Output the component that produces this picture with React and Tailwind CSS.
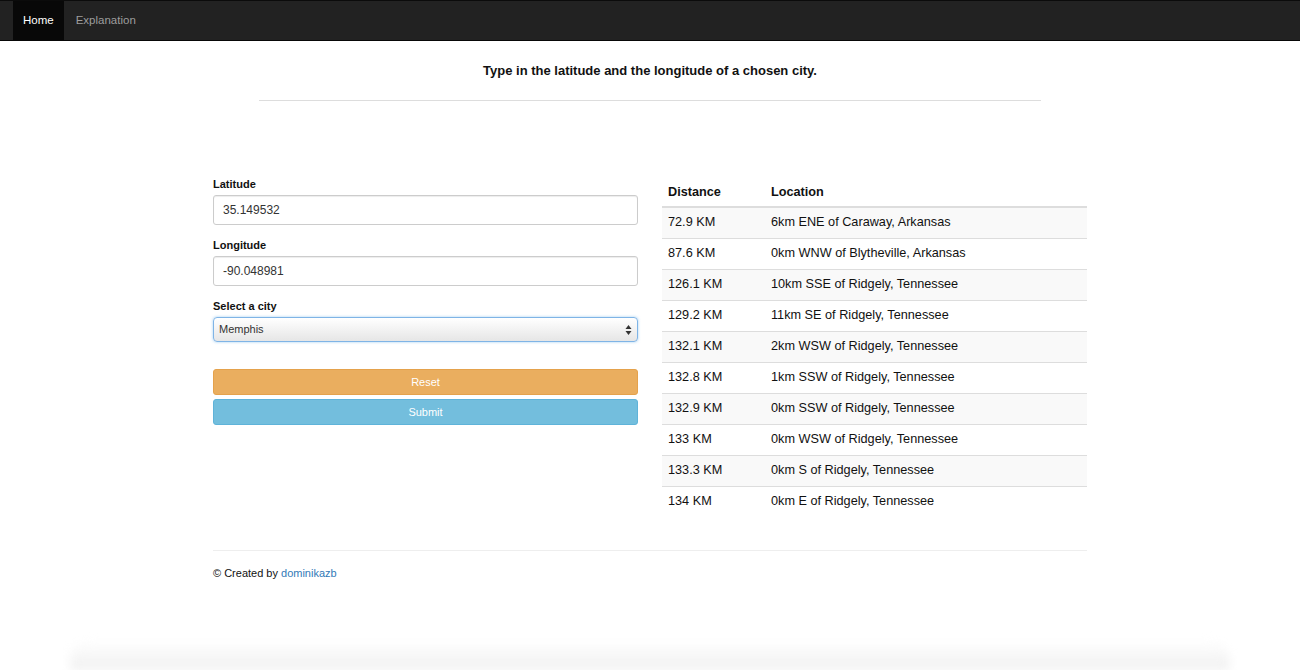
import { useState } from "react";

const rows = [
    ["72.9 KM", "6km ENE of Caraway, Arkansas"],
    ["87.6 KM", "0km WNW of Blytheville, Arkansas"],
    ["126.1 KM", "10km SSE of Ridgely, Tennessee"],
    ["129.2 KM", "11km SE of Ridgely, Tennessee"],
    ["132.1 KM", "2km WSW of Ridgely, Tennessee"],
    ["132.8 KM", "1km SSW of Ridgely, Tennessee"],
    ["132.9 KM", "0km SSW of Ridgely, Tennessee"],
    ["133 KM", "0km WSW of Ridgely, Tennessee"],
    ["133.3 KM", "0km S of Ridgely, Tennessee"],
    ["134 KM", "0km E of Ridgely, Tennessee"],
];

export default function App() {
    const [lat, setLat] = useState("35.149532");
    const [lng, setLng] = useState("-90.048981");

    return (
        <div className="relative h-[670px] overflow-hidden bg-white text-[#111] font-['Liberation_Sans',Arial,sans-serif]">
            {/* Navbar */}
            <nav className="h-[41px] bg-[#222] border-t border-t-[#0b0b0b] border-b border-b-[#080808] flex px-[13px]">
                <a className="h-full flex items-center px-[10px] bg-[#080808] text-white text-[11.5px]">Home</a>
                <a className="h-full flex items-center px-[12px] text-[#9d9d9d] text-[11.5px]">Explanation</a>
            </nav>

            {/* Heading */}
            <div className="w-[782px] mx-auto pt-[22px]">
                <h5 className="text-center text-[13px] font-semibold leading-[16px]">
                    Type in the latitude and the longitude of a chosen city.
                </h5>
                <hr className="mt-[21px] border-t border-[#ddd]" />
            </div>

            <div className="w-[874px] mx-auto mt-[76px]">
                <div className="grid grid-cols-2 gap-[24px]">
                    {/* Form */}
                    <div>
                        <label className="block text-[11px] font-bold leading-[14px]">Latitude</label>
                        <input
                            value={lat}
                            onChange={(e) => setLat(e.target.value)}
                            className="mt-[4px] w-full h-[30px] px-[9px] text-[12px] text-[#333] border border-[#ccc] rounded-[3px] shadow-[inset_0_1px_1px_rgba(0,0,0,0.075)] outline-none"
                        />
                        <label className="block mt-[13px] text-[11px] font-bold leading-[14px]">Longitude</label>
                        <input
                            value={lng}
                            onChange={(e) => setLng(e.target.value)}
                            className="mt-[4px] w-full h-[30px] px-[9px] text-[12px] text-[#333] border border-[#ccc] rounded-[3px] shadow-[inset_0_1px_1px_rgba(0,0,0,0.075)] outline-none"
                        />
                        <label className="block mt-[13px] text-[11px] font-bold leading-[14px]">Select a city</label>
                        <div className="relative mt-[4px] h-[25px] rounded-[4px] border border-[#7fb4e6] shadow-[0_0_3px_rgba(102,175,233,0.6)] bg-gradient-to-b from-white to-[#e6e6e6] flex items-center px-[5px] text-[11px] text-[#333]">
                            Memphis
                            <svg className="absolute right-[5px] top-[6px]" width="7" height="12" viewBox="0 0 7 12">
                                <path d="M3.5 1 L6.5 5 L0.5 5 Z" fill="#333" />
                                <path d="M3.5 11 L6.5 7 L0.5 7 Z" fill="#333" />
                            </svg>
                        </div>

                        <button className="mt-[27px] w-full h-[26px] rounded-[3px] bg-[#eaae5f] border border-[#e5a24c] text-white text-[11px]">
                            Reset
                        </button>
                        <button className="mt-[4px] w-full h-[26px] rounded-[3px] bg-[#73bedd] border border-[#5fb3d9] text-white text-[11px]">
                            Submit
                        </button>
                    </div>

                    {/* Results table */}
                    <table className="w-full text-[12.7px] border-collapse self-start">
                        <thead>
                            <tr className="border-b-2 border-[#ddd]">
                                <th className="text-left font-bold px-[6px] pt-[7px] pb-[5px] leading-[17px] w-[106px]">Distance</th>
                                <th className="text-left font-bold px-[3px] pt-[7px] pb-[5px] leading-[17px]">Location</th>
                            </tr>
                        </thead>
                        <tbody>
                            {rows.map((r, i) => (
                                <tr key={i} className={(i % 2 === 0 ? "bg-[#f9f9f9] " : "") + "border-t border-[#ddd] first:border-t-0 h-[31px]"}>
                                    <td className="px-[6px]">{r[0]}</td>
                                    <td className="px-[3px]">{r[1]}</td>
                                </tr>
                            ))}
                        </tbody>
                    </table>
                </div>

                {/* Footer */}
                <hr className="mt-[33px] border-t border-[#eee]" />
                <p className="mt-[14px] text-[11px]">
                    © Created by <a className="text-[#337ab7]">dominikazb</a>
                </p>
            </div>

            {/* window shadow strip */}
            <div className="absolute bottom-0 left-[70px] right-[70px] h-[30px] rounded-t-[20px] bg-gradient-to-b from-white to-[#f0f0f0] blur-[5px]" />
        </div>
    );
}
